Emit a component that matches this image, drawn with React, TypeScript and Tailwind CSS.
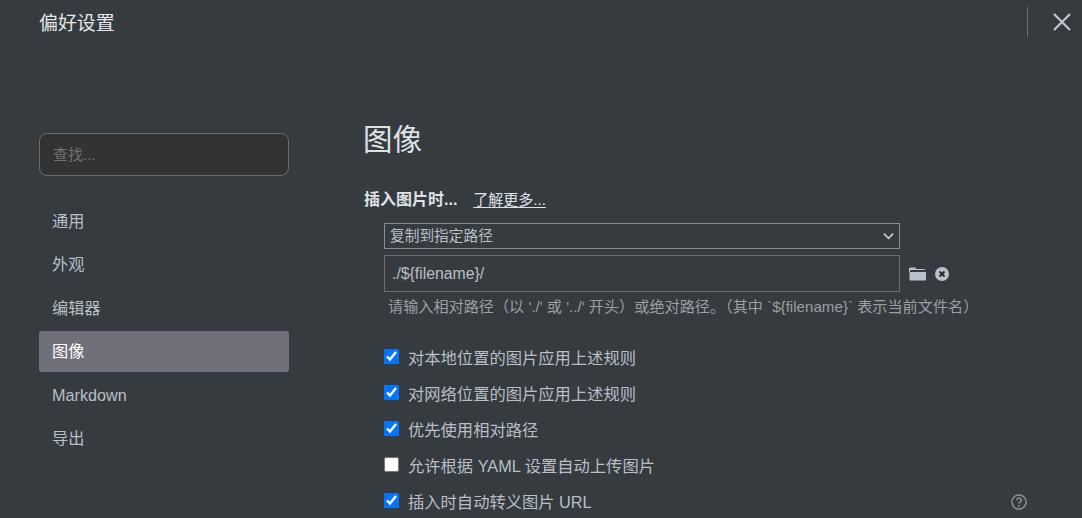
const FONT = "font-['Liberation_Sans','Noto_Sans_CJK_SC',sans-serif]";

function Check({ label, checked }: { label: string; checked: boolean }) {
  return (
    <label className="flex items-center h-[36px] pl-[20px]">
      <input type="checkbox" defaultChecked={checked} className="w-[15px] h-[15px] m-0 -mt-[3px] accent-[#0075ff]" />
      <span className="ml-[9px] text-[16.3px] leading-[36px] text-[#b8bfc6] whitespace-nowrap">{label}</span>
    </label>
  );
}

const nav = ["通用", "外观", "编辑器", "图像", "Markdown", "导出"];

export default function App() {
  return (
    <div className={`${FONT} relative w-[1082px] h-[518px] overflow-hidden bg-[#363b40] text-[#b8bfc6]`}>
      <header className="flex items-center h-[59px] pl-[39px] pr-[10px] border-b border-[#33373b]">
        <h2 className="flex-1 -mt-[10px] text-[18.9px] leading-[28px] text-[#e6e8ea]">偏好设置</h2>
        <div className="w-px h-[30px] -mt-[15px] bg-[#6a6f74]" />
        <svg viewBox="0 0 20 20" className="ml-[24px] -mt-[15px] w-[20px] h-[20px]" fill="none" stroke="#c3c7cf" strokeWidth="2.2">
          <path d="M2 2 L18 18 M18 2 L2 18" />
        </svg>
      </header>

      <div className="flex pl-[39px]">
        <aside className="w-[250px] pt-[74px] shrink-0">
          <input
            placeholder="查找..."
            className="w-full h-[43px] px-[13px] rounded-[8px] border border-[#696b6d] bg-[#333333] text-[15px] outline-none placeholder:text-[#6f7172]"
          />
          <nav className="mt-[25px] flex flex-col gap-[2.4px]">
            {nav.map((n) => (
              <div
                key={n}
                className={`h-[41px] leading-[41px] pl-[13px] rounded-[3px] text-[16.2px] ${
                  n === "图像" ? "bg-[#70707b] text-white" : "text-[#b8bfc6]"
                }`}
              >
                {n}
              </div>
            ))}
          </nav>
        </aside>

        <main className="ml-[75px] flex-1 pt-[60px]">
          <h1 className="-ml-px text-[29.5px] leading-[42px] text-[#dfe2e5]">图像</h1>
          <div className="mt-[28px] flex items-center h-[22px]">
            <strong className="font-bold text-[16px] text-[#dfe2e5]">插入图片时...</strong>
            <a className="ml-[16px] text-[#dfe2e5] underline underline-offset-2 text-[15px]">了解更多...</a>
          </div>

          <div className="pl-[20px] mt-[12px]">
            <div className="relative w-[516px] h-[26px]">
              <select className="block appearance-none w-full h-full border border-[#8a8d90] bg-transparent pl-[5px] text-[14.7px] text-[#b8bfc6] outline-none">
                <option>复制到指定路径</option>
              </select>
              <svg viewBox="0 0 12 8" className="absolute right-[6px] top-[9px] w-[11px] h-[8px]" fill="none" stroke="#c5cad0" strokeWidth="2">
                <path d="M1 1.5 L6 6.5 L11 1.5" />
              </svg>
            </div>
            <div className="mt-[6px] flex items-center">
              <input
                defaultValue="./${filename}/"
                className="w-[516px] h-[37px] border border-[#6d7073] bg-transparent px-[7px] text-[15.8px] text-[#b8bfc6] outline-none"
              />
              <svg viewBox="0 0 17 14" className="ml-[9px] w-[17px] h-[14px]" fill="#b9c2cc">
                <path d="M0 2 Q0 0.5 1.5 0.5 H6 L7.5 2 H15 Q16 2 16 3 H2 Q1 3 1 4 V5 H0 Z M0.5 5 H17 V12.5 Q17 13.5 16 13.5 H1.5 Q0.5 13.5 0.5 12.5 Z" />
              </svg>
              <svg viewBox="0 0 14 14" className="ml-[9px] w-[14px] h-[14px]">
                <circle cx="7" cy="7" r="7" fill="#b9c2cc" />
                <path d="M4.5 4.5 L9.5 9.5 M9.5 4.5 L4.5 9.5" stroke="#24282c" strokeWidth="1.9" />
              </svg>
            </div>
            <p className="mt-[5px] ml-[4px] text-[15.15px] leading-[20px] text-[#9b9fa3] whitespace-nowrap">
              请输入相对路径（以 './' 或 '../' 开头）或绝对路径。（其中 `${"{filename}"}` 表示当前文件名）
            </p>
          </div>

          <div className="mt-[23px]">
            <Check label="对本地位置的图片应用上述规则" checked />
            <Check label="对网络位置的图片应用上述规则" checked />
            <Check label="优先使用相对路径" checked />
            <Check label="允许根据 YAML 设置自动上传图片" checked={false} />
            <Check label="插入时自动转义图片 URL" checked />
          </div>
        </main>
      </div>

      <svg viewBox="0 0 16 16" className="absolute left-[1011px] top-[494px] w-[16px] h-[16px]" fill="none" stroke="#8d9195" strokeWidth="1.5">
        <circle cx="8" cy="8" r="7.1" />
        <path d="M5.8 6.2 A2.2 2.2 0 1 1 8.9 8.2 Q8 8.7 8 9.8" />
        <circle cx="8" cy="12" r="0.6" fill="#8d9195" strokeWidth="0.8" />
      </svg>
    </div>
  );
}
